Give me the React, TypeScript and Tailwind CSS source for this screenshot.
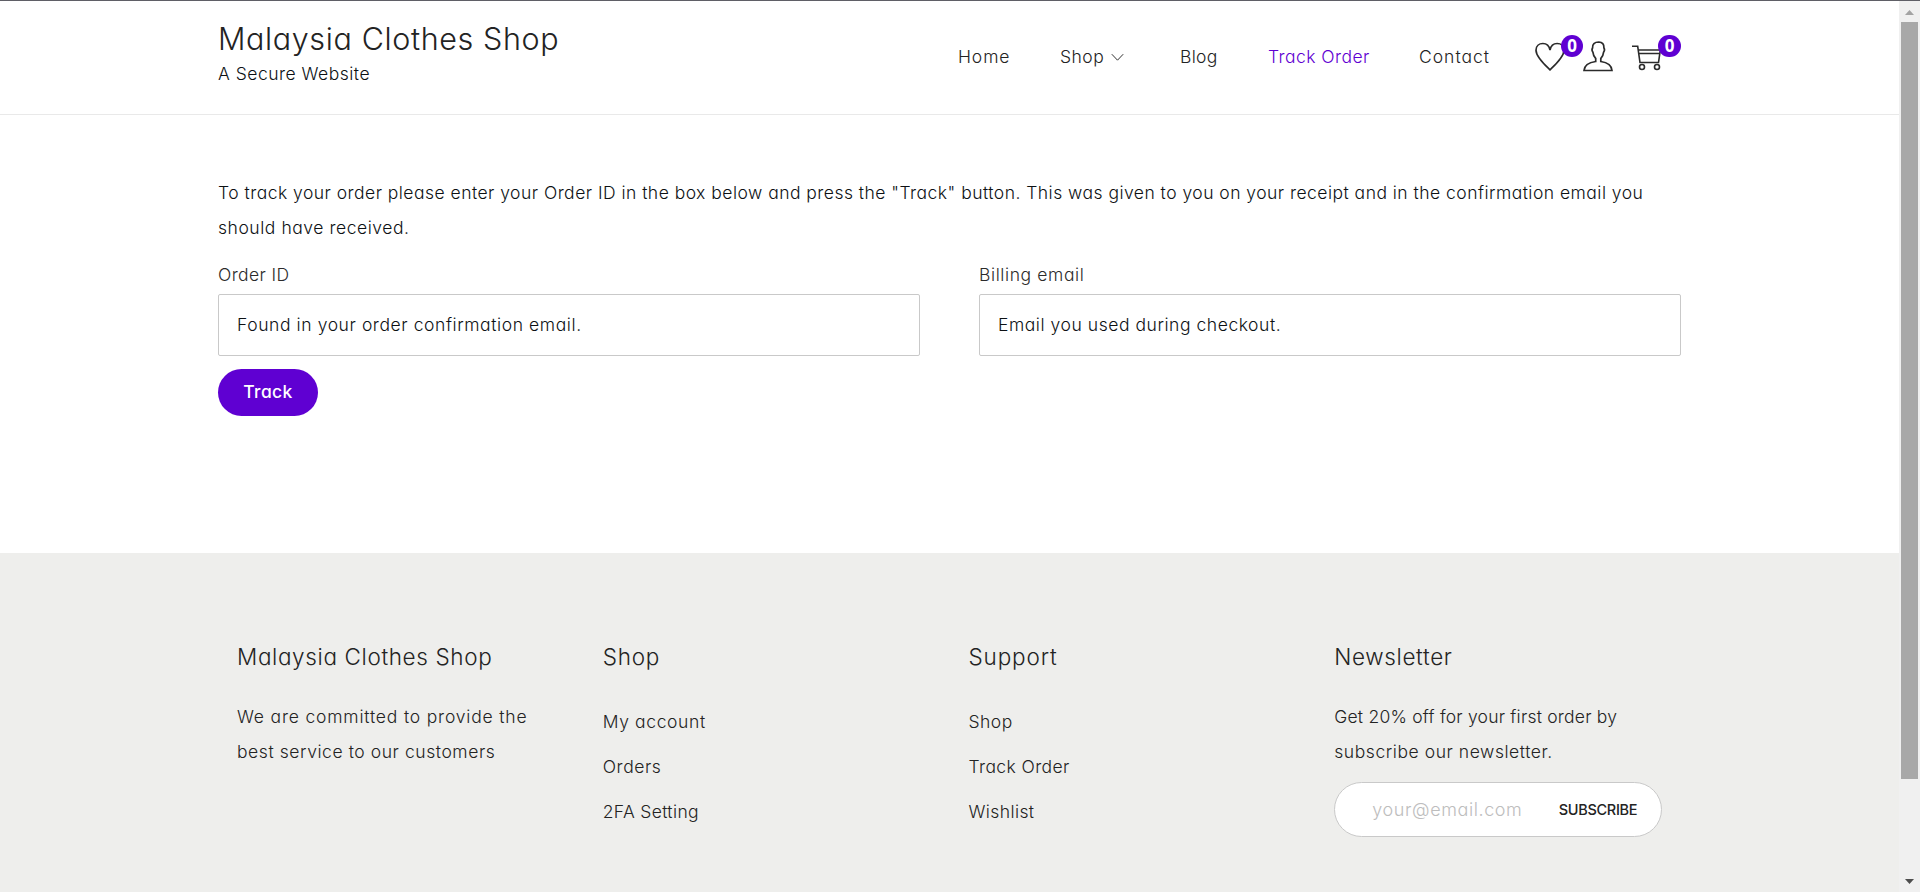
import type { ReactNode } from "react";

function Badge({ className }: { className: string }) {
  return (
    <span className={`absolute flex h-[22px] items-center justify-center rounded-full bg-[#5f00d2] font-['Open_Sans'] text-[17px] font-bold tracking-normal text-white ${className}`}>
      0
    </span>
  );
}

function Column({ title, spacing, children }: { title: string; spacing: string; children: ReactNode }) {
  return (
    <div className="px-[19px]">
      <h3 className={`h-[35px] text-[22.5px] leading-[35px] ${spacing}`}>{title}</h3>
      {children}
    </div>
  );
}

function Field({ label, labelSpacing, placeholder, spacing }: { label: string; labelSpacing: string; placeholder: string; spacing: string }) {
  return (
    <label className="block w-[702px]">
      <span className={`block h-[36px] leading-[34px] text-[#2b2b2b] ${labelSpacing}`}>{label}</span>
      <input
        placeholder={placeholder}
        className={`block h-[62px] w-full rounded-[2px] border border-[#c9c9c9] px-[18px] pb-[2px] placeholder:text-[#0d1114] placeholder:opacity-100 ${spacing}`}
      />
    </label>
  );
}

export default function App() {
  return (
    <div className="flex h-[892px] flex-col overflow-hidden bg-white font-['Inter',sans-serif] text-[17.5px] font-[360] text-[#232323] [font-feature-settings:'cv11']">
      <div className="h-px shrink-0 bg-[#5f5f66]" />
      <div className="flex min-h-0 flex-1">
        <div className="flex w-[1899px] flex-col">
          <header className="h-[114px] shrink-0 border-b border-[#e9e9e9]">
            <div className="mx-auto flex h-[113px] w-[1463px] justify-between">
              <div className="pt-[18px] whitespace-nowrap">
                <h1 className="h-10 text-[30.5px] leading-10 tracking-[0.62px]">Malaysia Clothes Shop</h1>
                <p className="leading-[30px] tracking-[0.5px] text-[#0d1114]">A Secure Website</p>
              </div>
              <div className="flex items-center whitespace-nowrap">
                <nav className="flex">
                  <a className="w-[102px] tracking-[0.9px]">Home</a>
                  <a className="flex w-[120px] items-center gap-[7px] tracking-[0.5px]">
                    Shop
                    <svg width="13" height="9" viewBox="0 0 13 9" fill="none" stroke="#333" strokeWidth="1">
                      <path d="M.8 1.2 6.500 7.200l5.700-6" />
                    </svg>
                  </a>
                  <a className="w-[88px] tracking-[0.3px]">Blog</a>
                  <a className="w-[151px] tracking-[0.45px] text-[#5f00d2]">Track Order</a>
                  <a className="w-[115px] tracking-[1px]">Contact</a>
                </nav>
                <div className="-mt-[3px] flex w-[147px] items-center">
                  <a className="relative block w-[49px]">
                    <svg width="32" height="32" viewBox="0 0 32 32" fill="none" stroke="#2b2b2b" strokeWidth="1.7">
                      <path d="M16 29.800C11 25 2 17 2 10.200 2 6 5 3.500 8.900 3.500c3.800 0 6.300 2.500 7.100 6.500 .8-4 3.300-6.500 7.100-6.500C27 3.500 30 6 30 10.200c0 6.800-9 14.800-14 19.600Z" />
                    </svg>
                    <Badge className="-top-[5px] left-[27px] w-[22px]" />
                  </a>
                  <a className="block w-[49px]">
                    <svg width="30" height="32" viewBox="0 0 30 32" fill="none" stroke="#2b2b2b" strokeWidth="1.7">
                      <path d="M12.700 18.500c-1.800-1.500-2.500-3.500-2.800-6.300-1-1.200-1-3.200-.3-4.400C9.200 4.200 11.500 2 15.800 2c3.600.2 5.300 2.300 5.100 5.800.7 1.200.7 3.200-.3 4.400-.3 2.800-1 4.800-2.800 6.300v3c6 .8 10.700 3 11.200 9H1c.5-6 5.700-8.200 11.700-9Z" />
                    </svg>
                  </a>
                  <a className="relative block w-[49px]">
                    <svg width="32" height="32" viewBox="0 0 32 32" fill="none" stroke="#2b2b2b" strokeWidth="1.6">
                      <path d="M0 6.300h5.700L8 22.500h18.500L28.300 10H6.200M6.800 13.500h21" />
                      <circle cx="10" cy="27" r="2.500" />
                      <circle cx="25" cy="27" r="2.500" />
                    </svg>
                    <Badge className="-top-[5px] left-[26px] w-[23px]" />
                  </a>
                </div>
              </div>
            </div>
          </header>

          <main className="mx-auto h-[438px] w-[1463px] shrink-0 pt-[60px] text-[#0d1114]">
            <p className="h-[70px] leading-[35px] whitespace-nowrap">
              <span className="tracking-[0.475px]">
                To track your order please enter your Order ID in the box below and press the "Track" button. This was given to you on your receipt and in the confirmation email you
              </span>
              <br />
              <span className="tracking-[0.55px]">should have received.</span>
            </p>
            <div className="mt-[13px] flex justify-between">
              <Field label="Order ID" labelSpacing="tracking-[0.4px]" placeholder="Found in your order confirmation email." spacing="tracking-[0.59px]" />
              <Field label="Billing email" labelSpacing="tracking-[0.6px]" placeholder="Email you used during checkout." spacing="tracking-[0.55px]" />
            </div>
            <button className="mt-[13px] block h-[47px] w-[100px] rounded-full bg-[#5f00d2] font-[450] tracking-[0.35px] text-white">Track</button>
          </main>

          <footer className="flex-1 bg-[#eeeeec] pt-[86px]">
            <div className="mx-auto grid w-[1463px] grid-cols-4 whitespace-nowrap">
              <Column title="Malaysia Clothes Shop" spacing="tracking-[0.63px]">
                <p className="mt-[25px] leading-[35px]">
                  <span className="tracking-[0.82px]">We are committed to provide the</span>
                  <br />
                  <span className="tracking-[0.57px]">best service to our customers</span>
                </p>
              </Column>
              <Column title="Shop" spacing="tracking-[0.75px]">
                <ul className="mt-[25px] leading-[45px]">
                  <li className="tracking-[0.62px]">My account</li>
                  <li className="tracking-[0.55px]">Orders</li>
                  <li className="tracking-[0.35px]">2FA Setting</li>
                </ul>
              </Column>
              <Column title="Support" spacing="tracking-[0.85px]">
                <ul className="mt-[25px] leading-[45px]">
                  <li className="tracking-[0.5px]">Shop</li>
                  <li className="tracking-[0.4px]">Track Order</li>
                  <li className="tracking-[0.4px]">Wishlist</li>
                </ul>
              </Column>
              <Column title="Newsletter" spacing="tracking-[0.65px]">
                <p className="mt-[25px] leading-[35px]">
                  <span className="tracking-[0.22px]">Get 20% off for your first order by</span>
                  <br />
                  <span className="tracking-[0.56px]">subscribe our newsletter.</span>
                </p>
                <form className="mt-[13px] flex h-[55px] w-[328px] items-center justify-between rounded-full border border-[#c9c9c9] bg-white pr-6 pl-[37px]">
                  <input placeholder="your@email.com" className="w-[170px] text-[18px] tracking-[0.6px] placeholder:text-[#bdbdbd] placeholder:opacity-100" />
                  <button type="button" className="text-[14.5px] font-medium tracking-[-0.3px]">SUBSCRIBE</button>
                </form>
              </Column>
            </div>
          </footer>
        </div>

        <div className="flex w-[21px] flex-col items-center justify-between bg-[#f0f0f0]">
          <svg className="shrink-0" width="21" height="21" viewBox="0 0 21 21">
            <path d="M6 14h9l-4.500-5Z" fill="#a3a3a3" />
          </svg>
          <div className="h-[757px] w-[17px] shrink-0 bg-[#a8a8a8]" />
          <div className="flex-1" />
          <svg className="shrink-0" width="21" height="21" viewBox="0 0 21 21">
            <path d="M6 8h9l-4.500 5Z" fill="#4d4d4d" />
          </svg>
        </div>
      </div>
    </div>
  );
}
